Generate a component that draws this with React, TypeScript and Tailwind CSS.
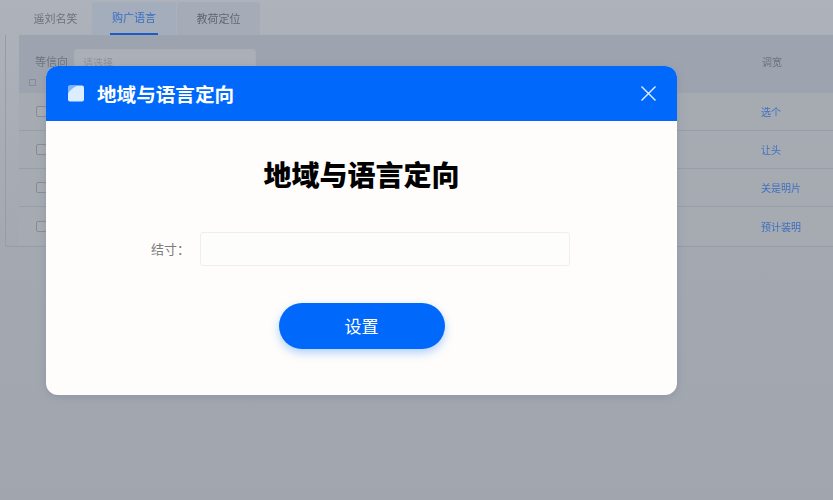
import React from "react";

const font = { fontFamily: '"Noto Sans CJK SC", "Noto Sans", sans-serif' };

function Row({ action, last }: { action: string; last?: boolean }) {
  return (
    <div className={`flex h-[38px] items-center bg-[#a6abb2] pl-[17px] ${last ? "" : "border-b border-[#979ea8]"}`}>
      <span className="h-[11px] w-[11px] rounded-[2px] border border-[#878d96] bg-[#a9adb3]" />
      <span className="ml-auto w-[72px] text-[10px] text-[#3f6fc0]">{action}</span>
    </div>
  );
}

export default function App() {
  return (
    <div className="relative h-[500px] w-[833px] overflow-hidden bg-gradient-to-b from-[#adb2bb] via-[#a4a9b1] to-[#a1a6ae]" style={font}>
      <div className="flex h-full flex-col pl-[5px] blur-[0.7px]">
        <div className="flex h-[35px] items-end pl-[14px]">
          <div className="flex h-[33px] w-[73px] items-center justify-center text-[11px] text-[#6d747d]">遥刘名笑</div>
          <div className="flex h-[33px] w-[84px] flex-col items-center rounded-t-[3px] bg-[#a3adbb]">
            <span className="flex flex-1 items-center text-[11px] text-[#3b6fc4]">购广语言</span>
            <span className="h-[2px] w-[48px] bg-[#1c5cc8]" />
          </div>
          <div className="ml-px flex h-[33px] w-[83px] items-center justify-center rounded-t-[3px] bg-[#a5acb7] text-[11px] text-[#5f666f]">教荷定位</div>
        </div>
        <div className="h-[212px] rounded-bl-[3px] border-b border-l border-[#969da7] pl-[13px]">
          <div className="relative flex h-[58px] bg-[#9da4af] pl-4 pt-[14px]">
            <span className="mt-[4px] text-[11px] text-[#6d747d]">等信向</span>
            <span className="ml-[6px] flex h-[30px] w-[182px] items-start rounded-[3px] border border-[#a8aeb6] bg-[#abb0b8] px-2 pt-[5px] text-[10px] text-[#8b929b]">请选择</span>
            <span className="ml-auto mr-[51px] mt-[5px] text-[10px] text-[#6d747d]">调宽</span>
            <span className="absolute left-[10px] top-[44px] h-[7px] w-[7px] border border-[#858c96]" />
          </div>
          <Row action="选个" />
          <Row action="让头" />
          <Row action="关是明片" />
          <Row action="预计装明" last />
        </div>
      </div>

      <div className="absolute left-[46px] top-[66px] flex h-[329px] w-[631px] flex-col overflow-hidden rounded-[12px] bg-[#fefdfb] shadow-[0_2px_8px_rgba(120,130,150,0.45)]">
        <div className="flex h-[55px] items-center bg-[#0069fb] pl-[22px] pr-[20px]">
          <svg width="16" height="17" viewBox="0 0 16 17" aria-hidden="true">
            <rect x="0" y="0.5" width="16" height="16" rx="2" fill="#dcedff" />
            <path d="M0 8.5 V2.5 Q0 0.5 2 0.5 H10 Q4 2.5 0 8.5Z" fill="#7db5ff" />
          </svg>
          <span className="ml-[13px] text-[19.6px] font-bold leading-none text-white">地域与语言定向</span>
          <svg className="ml-auto" width="17" height="17" viewBox="0 0 17 17" aria-hidden="true">
            <path d="M1.5 1.5 L15.5 15.5 M15.5 1.5 L1.5 15.5" stroke="#e6f0ff" strokeWidth="1.4" fill="none" />
          </svg>
        </div>
        <div className="flex flex-1 flex-col items-center">
          <h1 className="mt-[33px] text-[28px] font-black leading-[40px] text-black">地域与语言定向</h1>
          <div className="mt-[38px] flex items-center self-start pl-[105px]">
            <span className="w-[49px] text-[13px] text-[#7b7b7b]">结寸：</span>
            <div className="h-[34px] w-[370px] rounded-[3px] border border-[#eeeeec] bg-[#fdfdfc]" />
          </div>
          <button className="mt-[37px] flex h-[46px] w-[166px] items-center justify-center rounded-full bg-[#0069fb] text-[17px] text-white shadow-[0_4px_10px_rgba(0,105,251,0.3)]">设置</button>
        </div>
      </div>
    </div>
  );
}
